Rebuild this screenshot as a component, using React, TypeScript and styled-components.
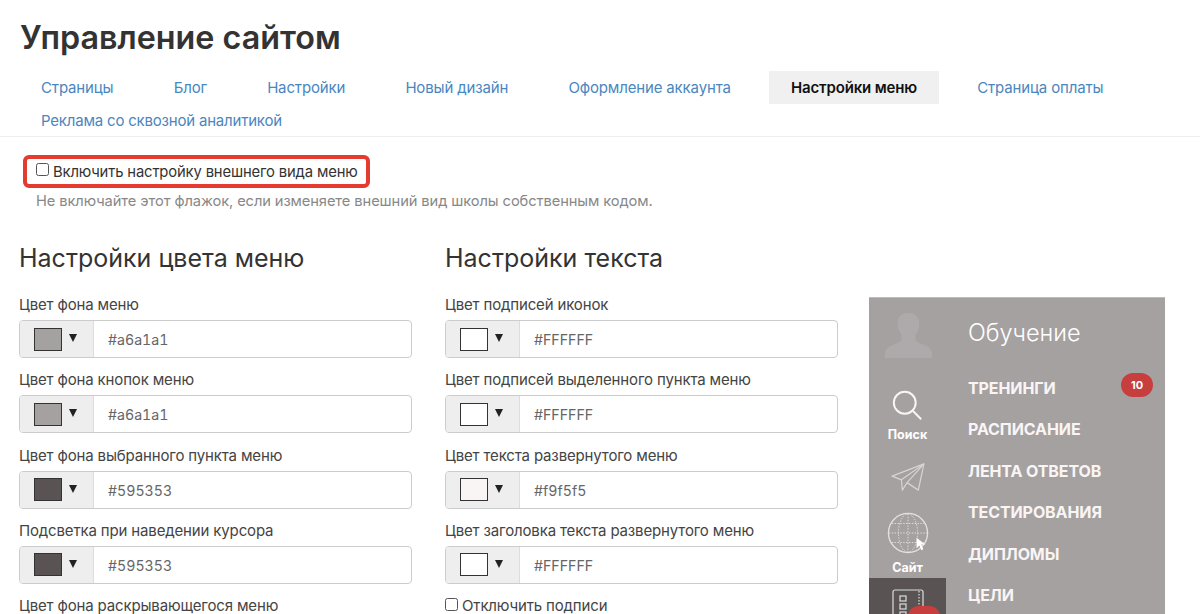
import React from "react";
import styled, { createGlobalStyle } from "styled-components";

const Global = createGlobalStyle`
  html, body { margin: 0; padding: 0; background: #fff; height: 614px; overflow: hidden; }
  body { font-family: Inter, "Noto Sans", sans-serif; color: #333; }
  * { box-sizing: border-box; }
`;

const Page = styled.div`
  width: 1200px;
  height: 614px;
  overflow: hidden;
  padding-top: 19px;
`;
const Title = styled.h1`
  margin: 0 0 0 20px;
  font-size: 32.3px;
  line-height: 38px;
  font-weight: 600;
  color: #333;
`;
const Tabs = styled.nav`
  margin-top: 14px;
  padding-left: 19px;
  display: flex;
  flex-wrap: wrap;
  column-gap: 16px;
  border-bottom: 1px solid #eee;
  height: 66px;
  align-content: flex-start;
`;
const Tab = styled.a<{ $active?: boolean }>`
  height: 33px;
  line-height: 33px;
  padding: 0 22.1px;
  font-size: 15px;
  letter-spacing: -0.15px;
  white-space: nowrap;
  color: ${(p) => (p.$active ? "#111" : "#4a86c0")};
  font-weight: ${(p) => (p.$active ? 600 : 400)};
  background: ${(p) => (p.$active ? "#f0f0f0" : "transparent")};
  &:first-child { padding-left: 22px; }
  &:last-child { padding-left: 22px; letter-spacing: -0.2px; }
`;
const Highlight = styled.label`
  margin: 18px 0 0 23px;
  width: 347px;
  height: 33px;
  border: 4px solid #e53a30;
  border-radius: 6px;
  display: flex;
  align-items: center;
  padding-left: 9px;
  font-size: 14.8px;
  letter-spacing: -0.15px;
  color: #333;
`;
const Box = styled.span`
  width: 13px;
  height: 13px;
  border: 1px solid #555;
  border-radius: 2.5px;
  background: #fff;
  margin-right: 4px;
  flex: none;
  position: relative;
  top: -2px;
`;
const Hint = styled.p`
  margin: 3px 0 0 36px;
  font-size: 14.7px;
  line-height: 20px;
  letter-spacing: -0.1px;
  color: #888;
`;
const Columns = styled.div`
  margin-top: 31px;
  display: grid;
  grid-template-columns: 393px 393px 296px;
  column-gap: 33px;
  padding-left: 19px;
  align-items: start;
`;
const Column = styled.section``;
const Heading = styled.h2`
  margin: 0 0 22px;
  font-size: 25px;
  line-height: 32px;
  font-weight: 400;
  color: #333;
`;
const Field = styled.div`
  height: 75.3px;
`;
const Label = styled.div`
  font-size: 15px;
  line-height: 18px;
  letter-spacing: -0.15px;
  color: #444;
  margin-bottom: 6px;
`;
const Control = styled.div`
  height: 38px;
  display: flex;
  border: 1px solid #ccc;
  border-radius: 4px;
  overflow: hidden;
`;
const Addon = styled.div`
  width: 74px;
  flex: none;
  background: #eee;
  border-right: 1px solid #ddd;
  display: flex;
  align-items: center;
  padding-left: 14px;
`;
const Swatch = styled.span<{ $c: string }>`
  width: 28px;
  height: 23px;
  border: 1px solid #333;
  background: ${(p) => p.$c};
`;
const Caret = styled.span`
  margin-left: 7px;
  width: 0;
  height: 0;
  border-left: 4px solid transparent;
  border-right: 4px solid transparent;
  border-top: 8px solid #222;
  position: relative;
  top: -1px;
`;
const Value = styled.div`
  padding-left: 14px;
  line-height: 37px;
  font-size: 14.2px;
  font-feature-settings: "tnum";
  color: #666;
`;
const CheckLine = styled.label`
  display: flex;
  align-items: center;
  font-size: 15px;
  line-height: 18px;
  letter-spacing: -0.15px;
  color: #444;
`;
const Preview = styled.aside`
  margin: 55px 2px 0 -2px;
  height: 330px;
  background: #a6a1a1;
  border-top: 1px solid #bbb;
  display: grid;
  grid-template-columns: 77px 1fr;
  color: #f9f5f5;
`;
const Rail = styled.div`
  display: flex;
  flex-direction: column;
  align-items: center;
`;
const RailItem = styled.div<{ $h: number; $active?: boolean }>`
  width: 100%;
  height: ${(p) => p.$h}px;
  display: flex;
  flex-direction: column;
  align-items: center;
  justify-content: flex-start;
  position: relative;
  background: ${(p) => (p.$active ? "#595353" : "transparent")};
  font-size: 12.5px;
  font-weight: 700;
  line-height: 16px;
  color: #fff;
`;
const RailIcon = styled.svg<{ $top: number }>`
  display: block;
  flex: none;
  margin-top: ${(p) => p.$top}px;
`;
const RailLabel = styled.span`
  margin-top: 6px;
`;
const RailBadge = styled.span`
  position: absolute;
  left: 39px;
  top: 28px;
  width: 32px;
  height: 22px;
  border-radius: 10px;
  background: #c73e3e;
`;
const Panel = styled.div`
  padding: 20px 12px 0 22px;
`;
const PanelTitle = styled.div`
  font-size: 23.5px;
  line-height: 30px;
  font-weight: 300;
  color: #fff;
  margin-bottom: 29px;
`;
const PanelRow = styled.div`
  height: 41.4px;
  display: flex;
  justify-content: space-between;
  font-size: 16px;
  line-height: 22px;
  font-weight: 700;
  letter-spacing: -0.1px;
  color: #f9f5f5;
`;
const Count = styled.span`
  width: 32px;
  height: 24px;
  border-radius: 12px;
  background: #c73e3e;
  color: #fff;
  font-size: 11px;
  line-height: 24px;
  text-align: center;
  position: relative;
  top: -4px;
`;

const left = [
  ["Цвет фона меню", "#a6a1a1", "#a6a1a1"],
  ["Цвет фона кнопок меню", "#a6a1a1", "#a6a1a1"],
  ["Цвет фона выбранного пункта меню", "#595353", "#595353"],
  ["Подсветка при наведении курсора", "#595353", "#595353"],
  ["Цвет фона раскрывающегося меню", "#595353", "#595353"],
];
const right = [
  ["Цвет подписей иконок", "#FFFFFF", "#ffffff"],
  ["Цвет подписей выделенного пункта меню", "#FFFFFF", "#ffffff"],
  ["Цвет текста развернутого меню", "#f9f5f5", "#f9f5f5"],
  ["Цвет заголовка текста развернутого меню", "#FFFFFF", "#ffffff"],
];
const tabs = ["Страницы", "Блог", "Настройки", "Новый дизайн", "Оформление аккаунта", "Настройки меню", "Страница оплаты", "Реклама со сквозной аналитикой"];
const menu = ["ТРЕНИНГИ", "РАСПИСАНИЕ", "ЛЕНТА ОТВЕТОВ", "ТЕСТИРОВАНИЯ", "ДИПЛОМЫ", "ЦЕЛИ"];

const ColorField = ({ label, value, color }: { label: string; value: string; color: string }) => (
  <Field>
    <Label>{label}</Label>
    <Control>
      <Addon>
        <Swatch $c={color} />
        <Caret />
      </Addon>
      <Value>{value}</Value>
    </Control>
  </Field>
);

export default function App() {
  return (
    <Page>
      <Global />
      <Title>Управление сайтом</Title>
      <Tabs>
        {tabs.map((t) => (
          <Tab key={t} $active={t === "Настройки меню"}>{t}</Tab>
        ))}
      </Tabs>
      <Highlight>
        <Box />
        Включить настройку внешнего вида меню
      </Highlight>
      <Hint>Не включайте этот флажок, если изменяете внешний вид школы собственным кодом.</Hint>
      <Columns>
        <Column>
          <Heading>Настройки цвета меню</Heading>
          {left.map(([l, v, c]) => (
            <ColorField key={l} label={l} value={v} color={c} />
          ))}
        </Column>
        <Column>
          <Heading>Настройки текста</Heading>
          {right.map(([l, v, c]) => (
            <ColorField key={l} label={l} value={v} color={c} />
          ))}
          <CheckLine>
            <Box />
            Отключить подписи
          </CheckLine>
        </Column>
        <Preview>
          <Rail>
            <RailItem $h={79}>
              <RailIcon $top={14} width="49" height="46" viewBox="0 0 50 50" preserveAspectRatio="none">
                <path d="M25 1c-7 0-10 5-10 12 0 5 2 9 4 12v4c0 3-3 4-9 7-5 2-8 4-8 11v3h48v-3c0-7-3-9-8-11-6-3-9-4-9-7v-4c2-3 4-7 4-12 0-7-3-12-12-12z" fill="#aeaaab" />
              </RailIcon>
            </RailItem>
            <RailItem $h={80}>
              <RailIcon $top={13} width="31" height="31" viewBox="0 0 34 34" fill="none" stroke="#f9f5f5" strokeWidth="2.200">
                <circle cx="14" cy="14" r="12" />
                <path d="M22.500 22.500L32 32" />
              </RailIcon>
              <RailLabel>Поиск</RailLabel>
            </RailItem>
            <RailItem $h={48}>
              <RailIcon $top={5} width="34" height="30" viewBox="0 0 36 32" fill="none" stroke="#d8d4d4" strokeWidth="1.300" strokeLinejoin="round">
                <path d="M1 15L35 2 29 30 17 22 12 30 11 19z" />
                <path d="M35 2L11 19M35 2L17 22" />
              </RailIcon>
            </RailItem>
            <RailItem $h={73}>
              <RailIcon $top={7} width="42" height="42" viewBox="0 0 44 44" fill="none" stroke="#e4e0e0">
                <circle cx="22" cy="22" r="20.500" strokeWidth="1.400" />
                <g strokeDasharray="1.500 1.500" strokeWidth="1">
                  <ellipse cx="22" cy="22" rx="10" ry="20" />
                  <path d="M22 2v40M2 22h40M5 12h34M5 32h34" />
                </g>
                <path d="M31 27l0 11 3-3 2 5 2-1-2-5h4z" fill="#fff" stroke="none" />
              </RailIcon>
              <RailLabel>Сайт</RailLabel>
            </RailItem>
            <RailItem $h={60} $active>
              <RailIcon $top={11} width="32" height="36" viewBox="0 0 32 36" fill="none" stroke="#ddd" strokeWidth="1.200">
                <rect x="1" y="1" width="30" height="34" rx="2" />
                <path d="M27 2v32" strokeDasharray="1.500 1.500" />
                <rect x="8" y="7" width="6" height="5" />
                <rect x="8" y="15" width="6" height="5" />
                <rect x="8" y="23" width="6" height="5" />
              </RailIcon>
              <RailBadge />
            </RailItem>
          </Rail>
          <Panel>
            <PanelTitle>Обучение</PanelTitle>
            {menu.map((m, i) => (
              <PanelRow key={m}>
                {m}
                {i === 0 && <Count>10</Count>}
              </PanelRow>
            ))}
          </Panel>
        </Preview>
      </Columns>
    </Page>
  );
}
